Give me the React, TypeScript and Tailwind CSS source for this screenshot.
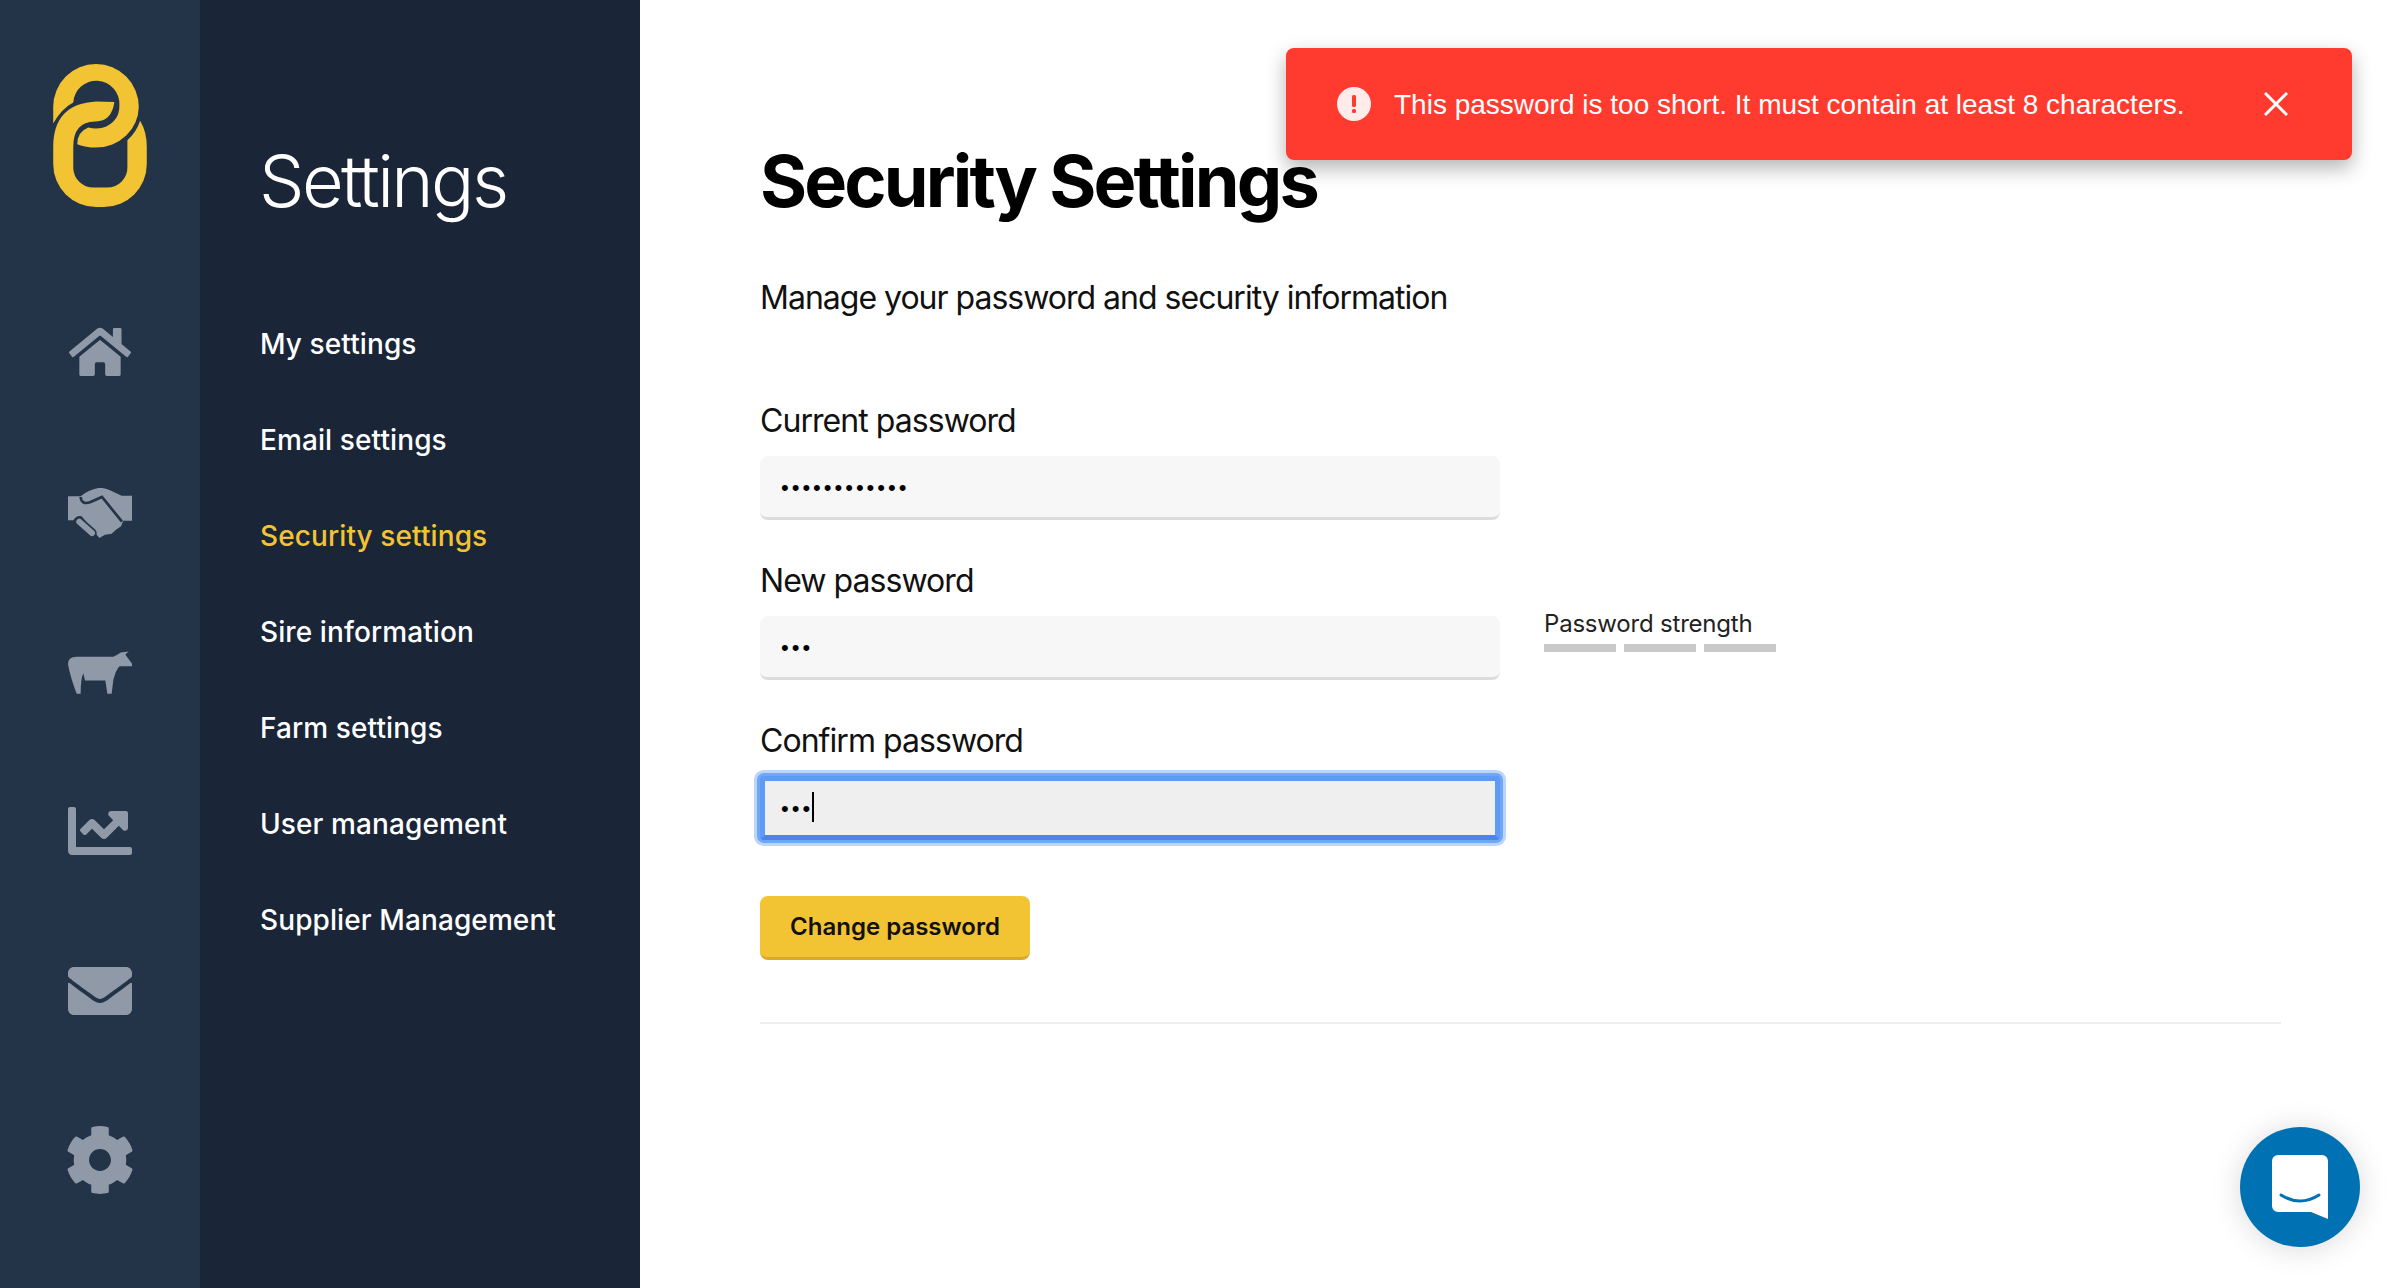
import React from "react";
import { FaHome, FaChartLine, FaEnvelope, FaCog } from "react-icons/fa";

const nav = ["My settings", "Email settings", "Security settings", "Sire information", "Farm settings", "User management", "Supplier Management"];

function Logo() {
  return (
    <svg viewBox="70 72 280 428" className="w-[94px] h-[143px]" fill="#f2c433">
      <path d="M70 250V200A128 128 0 0 1 326 200A128 122 0 0 1 198 322Q168 322 142 312Q142 275 175 262Q190 266 200 265A68 65 0 0 0 268 195A69 69 0 0 0 130 187Q95 205 70 250Z" />
      <path d="M253 186Q225 184 200 184Q70 190 70 320V372A128 128 0 0 0 198 500H222A128 128 0 0 0 350 372V320Q350 275 330 242Q320 275 292 300V380A60 60 0 0 1 232 442H190A60 60 0 0 1 130 385V320Q130 245 195 244Q245 245 253 186Z" />
    </svg>
  );
}

function Cow() {
  return (
    <svg viewBox="54 96 192 128" className="w-[64px] h-[43px]" fill="currentColor">
      <path d="M54 135Q54 113 80 113L190 113Q205 105 212 100L236 97L226 106L246 134V141H210Q205 142 197 160L190 182L185 224H172L166 184H105L100 162Q92 178 92 224H80Q60 170 54 135Z" />
    </svg>
  );
}

function Handshake() {
  return (
    <svg viewBox="84 565 192 150" className="w-[64px] h-[50px]">
      <path d="M84 590H122Q145 570 175 565Q190 563 210 572L245 588H276V663H250L243 680L228 690L215 702L195 705L178 715L170 705L125 650Q110 645 100 662H84Z" fill="currentColor" />
      <path d="M122 592Q124 616 150 608L186 592L246 666" fill="none" stroke="#233449" strokeWidth="8" />
      <path d="M118 666L156 700" fill="none" stroke="#233449" strokeWidth="28" strokeLinecap="round" />
      <path d="M118 666L156 700" fill="none" stroke="currentColor" strokeWidth="18" strokeLinecap="round" />
    </svg>
  );
}

const dotClass = "text-[22px] tracking-[3px] text-black [font-family:'Liberation_Sans',sans-serif]";

function Field({ label, value, focused, children }: { label: string; value: string; focused?: boolean; children?: React.ReactNode }) {
  return (
    <div className="flex flex-col">
      <label className="h-[48px] mb-[12px] text-[32px] leading-[50px] tracking-[-0.95px] text-[#111]">{label}</label>
      <div className="flex">
        <div className="relative w-[740px] h-[64px]">
          {focused ? (
            <>
              <input
                type="password"
                readOnly
                defaultValue={value}
                className={`w-full h-full pl-[16px] pt-[1px] bg-[#efefef] rounded-[4px] border-[5px] border-[#5f9bf4] border-b-[#4a86e8] outline-none shadow-[0_0_0_3px_#6fa6f6,0_0_0_6px_#bcd6fb] ${dotClass}`}
              />
              <span className="absolute left-[52px] top-[16px] w-[2px] h-[30px] bg-black" />
            </>
          ) : (
            <input
              type="password"
              readOnly
              defaultValue={value}
              className={`w-full h-full pl-[21px] pt-[3px] bg-[#f7f7f7] rounded-[8px] border-b-[3px] border-[#dcdcdc] outline-none ${dotClass}`}
            />
          )}
        </div>
        {children}
      </div>
    </div>
  );
}

export default function App() {
  return (
    <div className="relative flex h-[1288px] w-[2400px] overflow-hidden bg-white [font-family:Inter,sans-serif]">
      <aside className="w-[200px] shrink-0 bg-[#233449] flex flex-col items-center text-[#8f99a7] pt-[64px]">
        <Logo />
        <div className="mt-[121px] h-[47px] flex items-center justify-center"><FaHome size={62} /></div>
        <div className="mt-[113px] h-[50px] flex items-center justify-center"><Handshake /></div>
        <div className="mt-[113px] h-[43px] flex items-center justify-center"><Cow /></div>
        <div className="mt-[112px] h-[49px] flex items-center justify-center"><FaChartLine size={64} /></div>
        <div className="mt-[113px] h-[46px] flex items-center justify-center"><FaEnvelope size={64} /></div>
        <div className="mt-[114px] h-[63px] flex items-center justify-center"><FaCog size={70} /></div>
      </aside>

      <nav className="w-[440px] shrink-0 bg-[#1a2638] pl-[60px] pt-[133px]">
        <h2 className="text-[72px] leading-[96px] font-light tracking-[-2.6px] text-white -ml-[1px]">Settings</h2>
        <ul className="mt-[67px]">
          {nav.map((n) => (
            <li key={n} className={`h-[96px] leading-[96px] text-[28px] font-medium tracking-[0.1px] ${n === "Security settings" ? "text-[#f2c433]" : "text-white"}`}>{n}</li>
          ))}
        </ul>
      </nav>

      <main className="flex-1 pl-[120px] pt-[133px]">
        <h1 className="text-[72px] leading-[96px] font-bold tracking-[-2.85px] text-black">Security Settings</h1>
        <p className="mt-[44px] h-[48px] text-[32px] leading-[50px] tracking-[-1px] text-[#111]">Manage your password and security information</p>
        <div className="mt-[75px] flex flex-col gap-[36px]">
          <Field label="Current password" value="............" />
          <Field label="New password" value="...">
            <div className="ml-[44px] w-[232px]">
              <div className="text-[24px] leading-[32px] mt-[-8px] tracking-[-0.2px] text-[#222]">Password strength</div>
              <div className="mt-[4px] flex gap-[8px]">
                <span className="w-[72px] h-[8px] bg-[#c8c8c8]" />
                <span className="w-[72px] h-[8px] bg-[#c8c8c8]" />
                <span className="w-[72px] h-[8px] bg-[#c8c8c8]" />
              </div>
            </div>
          </Field>
          <Field label="Confirm password" value="..." focused />
        </div>
        <button className="mt-[56px] block w-[270px] h-[64px] rounded-[8px] bg-[#f2c433] border-b-[3px] border-[#dba92a] text-[24px] font-semibold text-[#111]">Change password</button>
        <div className="mt-[62px] w-[1521px] h-[2px] bg-[#eeeeee]" />
      </main>

      <div className="absolute left-[1286px] top-[48px] w-[1066px] h-[112px] rounded-[8px] bg-[#ff3b30] shadow-[0_8px_20px_rgba(0,0,0,0.3)] flex items-center pl-[51px] text-white [font-family:'Liberation_Sans',sans-serif]">
        <svg viewBox="0 0 34 34" className="w-[34px] h-[34px] shrink-0">
          <circle cx="17" cy="17" r="17" fill="#ffecea" />
          <rect x="15" y="8" width="4" height="12" rx="1.5" fill="#ff3b30" />
          <rect x="15" y="22" width="4" height="4" rx="1.5" fill="#ff3b30" />
        </svg>
        <span className="ml-[23px] pt-[2px] text-[28px] whitespace-nowrap">This password is too short. It must contain at least 8 characters.</span>
        <svg viewBox="0 0 24 24" className="absolute left-[978px] top-[44px] w-[24px] h-[24px]" stroke="white" strokeWidth="3" fill="none">
          <path d="M1 1L23 23M23 1L1 23" />
        </svg>
      </div>

      <div className="absolute left-[2240px] top-[1127px] w-[120px] h-[120px] rounded-full bg-[#0071b2] shadow-[0_2px_30px_rgba(0,0,0,0.15)] flex items-center justify-center">
        <svg viewBox="0 0 56 64" className="w-[56px] h-[64px]">
          <path d="M6 0H50A6 6 0 0 1 56 6V64L39 57H6A6 6 0 0 1 0 51V6A6 6 0 0 1 6 0Z" fill="white" />
          <path d="M9 40Q28 52 47 40" fill="none" stroke="#0071b2" strokeWidth="3" strokeLinecap="round" />
        </svg>
      </div>
    </div>
  );
}
